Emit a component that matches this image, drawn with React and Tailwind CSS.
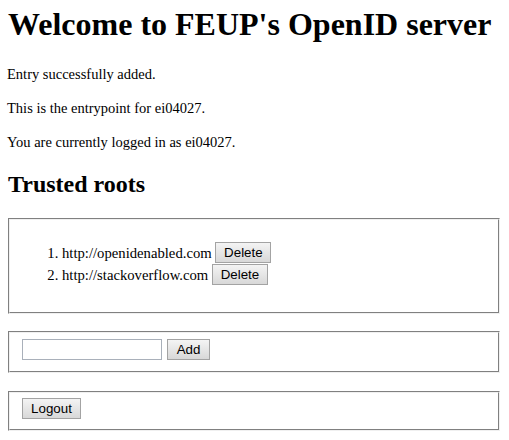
export default function App() {
  const Fieldset = ({ children, className = "" }) => (
    <div className={"ml-[8px] mr-[9px] border-t border-l border-b border-r border-t-[#808080] border-l-[#808080] border-b-[#f0f0f0] border-r-[#f0f0f0] " + className}>
      <div className="border-t border-l border-b border-r border-t-[#f0f0f0] border-l-[#f0f0f0] border-b-[#808080] border-r-[#808080] pt-[5.6px] pb-[10px] px-[12px]">
        {children}
      </div>
    </div>
  );
  const Btn = ({ children, w, align = "align-middle" }) => (
    <button
      type="button"
      className={"h-[21px] border border-[#a3a3a3] bg-gradient-to-b from-[#f4f4f4] to-[#d8d8d8] font-['Liberation_Sans'] text-[13.33px] leading-[19px] text-black " + align + " " + w}
    >
      {children}
    </button>
  );
  return (
    <div className="bg-white min-h-[440px] w-[509px] font-['Liberation_Serif',serif] text-black pt-[6px]">
      <h1 className="ml-[8px] text-[32px] font-bold leading-[37px] mb-[21.5px]">Welcome to FEUP's OpenID server</h1>
      <p className="ml-[7px] text-[14.5px] leading-[18px] mb-[16px]">Entry successfully added.</p>
      <p className="ml-[7px] text-[14.5px] leading-[18px] mb-[16px]">This is the entrypoint for ei04027.</p>
      <p className="ml-[7px] text-[14.5px] leading-[18px]">You are currently logged in as ei04027.</p>
      <h2 className="ml-[8px] mt-[20px] mb-[20px] text-[24px] font-bold leading-[27.6px]">Trusted roots</h2>
      <Fieldset>
        <ol className="my-[16px] pl-[40px] list-decimal text-[14.7px]">
          <li className="h-[22px] leading-[22px]">
            http://openidenabled.com <Btn w="w-[56px]" align="align-top">Delete</Btn>
          </li>
          <li className="h-[22px] leading-[22px]">
            http://stackoverflow.com <Btn w="w-[56px]" align="align-top">Delete</Btn>
          </li>
        </ol>
      </Fieldset>
      <Fieldset className="mt-[17.5px]">
        <div className="flex items-center gap-[5px] h-[22px]">
          <input type="text" className="w-[140px] h-[21px] border border-[#a9b0ba] bg-white outline-none" />
          <Btn w="w-[43px]">Add</Btn>
        </div>
      </Fieldset>
      <Fieldset className="mt-[18.5px]">
        <div className="flex items-center h-[20px]">
          <Btn w="w-[59px]">Logout</Btn>
        </div>
      </Fieldset>
    </div>
  );
}
